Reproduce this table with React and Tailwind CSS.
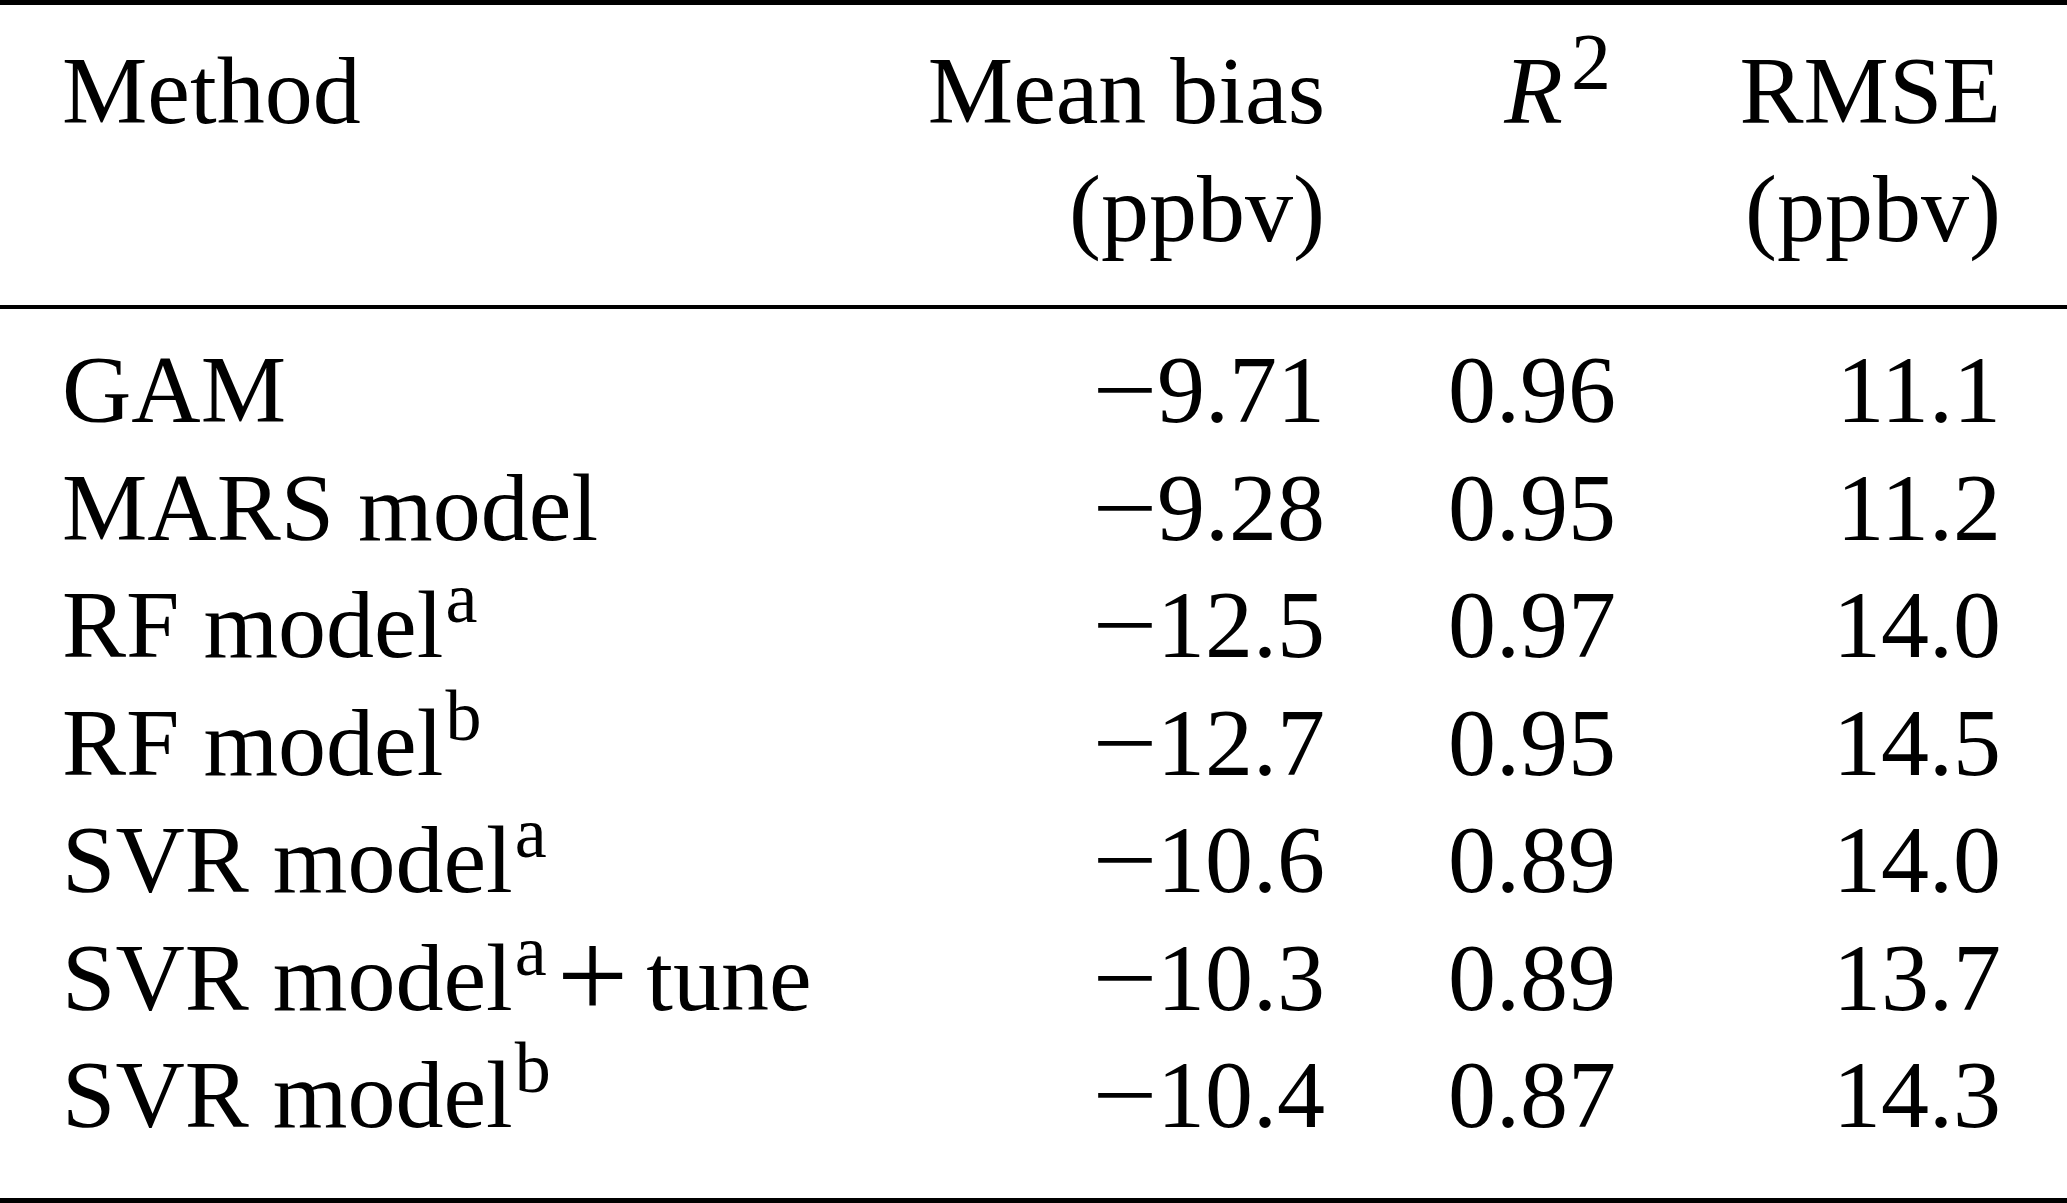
import React from "react";

const Sup = ({ children }) => (
  <span className="text-[72px] leading-[0] align-[35px] ml-[2px]">{children}</span>
);

const Minus = () => (
  <span className="inline-block origin-right scale-x-[1.2]">−</span>
);

const Num = ({ v }) =>
  v.startsWith("-") ? (
    <>
      <Minus />
      {v.slice(1)}
    </>
  ) : (
    v
  );

const rows = [
  { m: <>GAM</>, b: "-9.71", r: "0.96", e: "11.1" },
  { m: <>MARS model</>, b: "-9.28", r: "0.95", e: "11.2" },
  { m: <>RF model<Sup>a</Sup></>, b: "-12.5", r: "0.97", e: "14.0" },
  { m: <>RF model<Sup>b</Sup></>, b: "-12.7", r: "0.95", e: "14.5" },
  { m: <>SVR model<Sup>a</Sup></>, b: "-10.6", r: "0.89", e: "14.0" },
  {
    m: (
      <>
        SVR model<Sup>a</Sup>
        <span className="text-[127px] leading-[0] align-[-8px] ml-[10px]">+</span>
        <span className="ml-[18px]">tune</span>
      </>
    ),
    b: "-10.3",
    r: "0.89",
    e: "13.7",
  },
  { m: <>SVR model<Sup>b</Sup></>, b: "-10.4", r: "0.87", e: "14.3" },
];

export default function App() {
  return (
    <div className="w-[2067px] h-[1203px] bg-white text-black overflow-hidden font-['Liberation_Serif',serif] text-[96px]">
      <div className="h-[5px] bg-black" />
      <div className="grid grid-cols-[763px_500px_291px_385px] pl-[62px] pr-[66px] pt-[27px] pb-[37px] leading-[118px] whitespace-nowrap">
        <div>Method</div>
        <div className="text-right">Mean bias</div>
        <div className="text-right pr-[5px]">
          <span className="italic">R</span>
          <span className="text-[80px] leading-[0] align-[34px] ml-[8px]">2</span>
        </div>
        <div className="text-right">RMSE</div>
        <div />
        <div className="text-right">(ppbv)</div>
        <div />
        <div className="text-right">(ppbv)</div>
      </div>
      <div className="h-[4px] bg-black" />
      <div className="grid grid-cols-[763px_500px_291px_385px] pl-[62px] pr-[66px] pt-[22px] pb-[44px] leading-[117.5px] whitespace-nowrap">
        {rows.map((row, i) => (
          <React.Fragment key={i}>
            <div>{row.m}</div>
            <div className="text-right">
              <Num v={row.b} />
            </div>
            <div className="text-right">{row.r}</div>
            <div className="text-right">{row.e}</div>
          </React.Fragment>
        ))}
      </div>
      <div className="h-[5px] bg-black" />
    </div>
  );
}
